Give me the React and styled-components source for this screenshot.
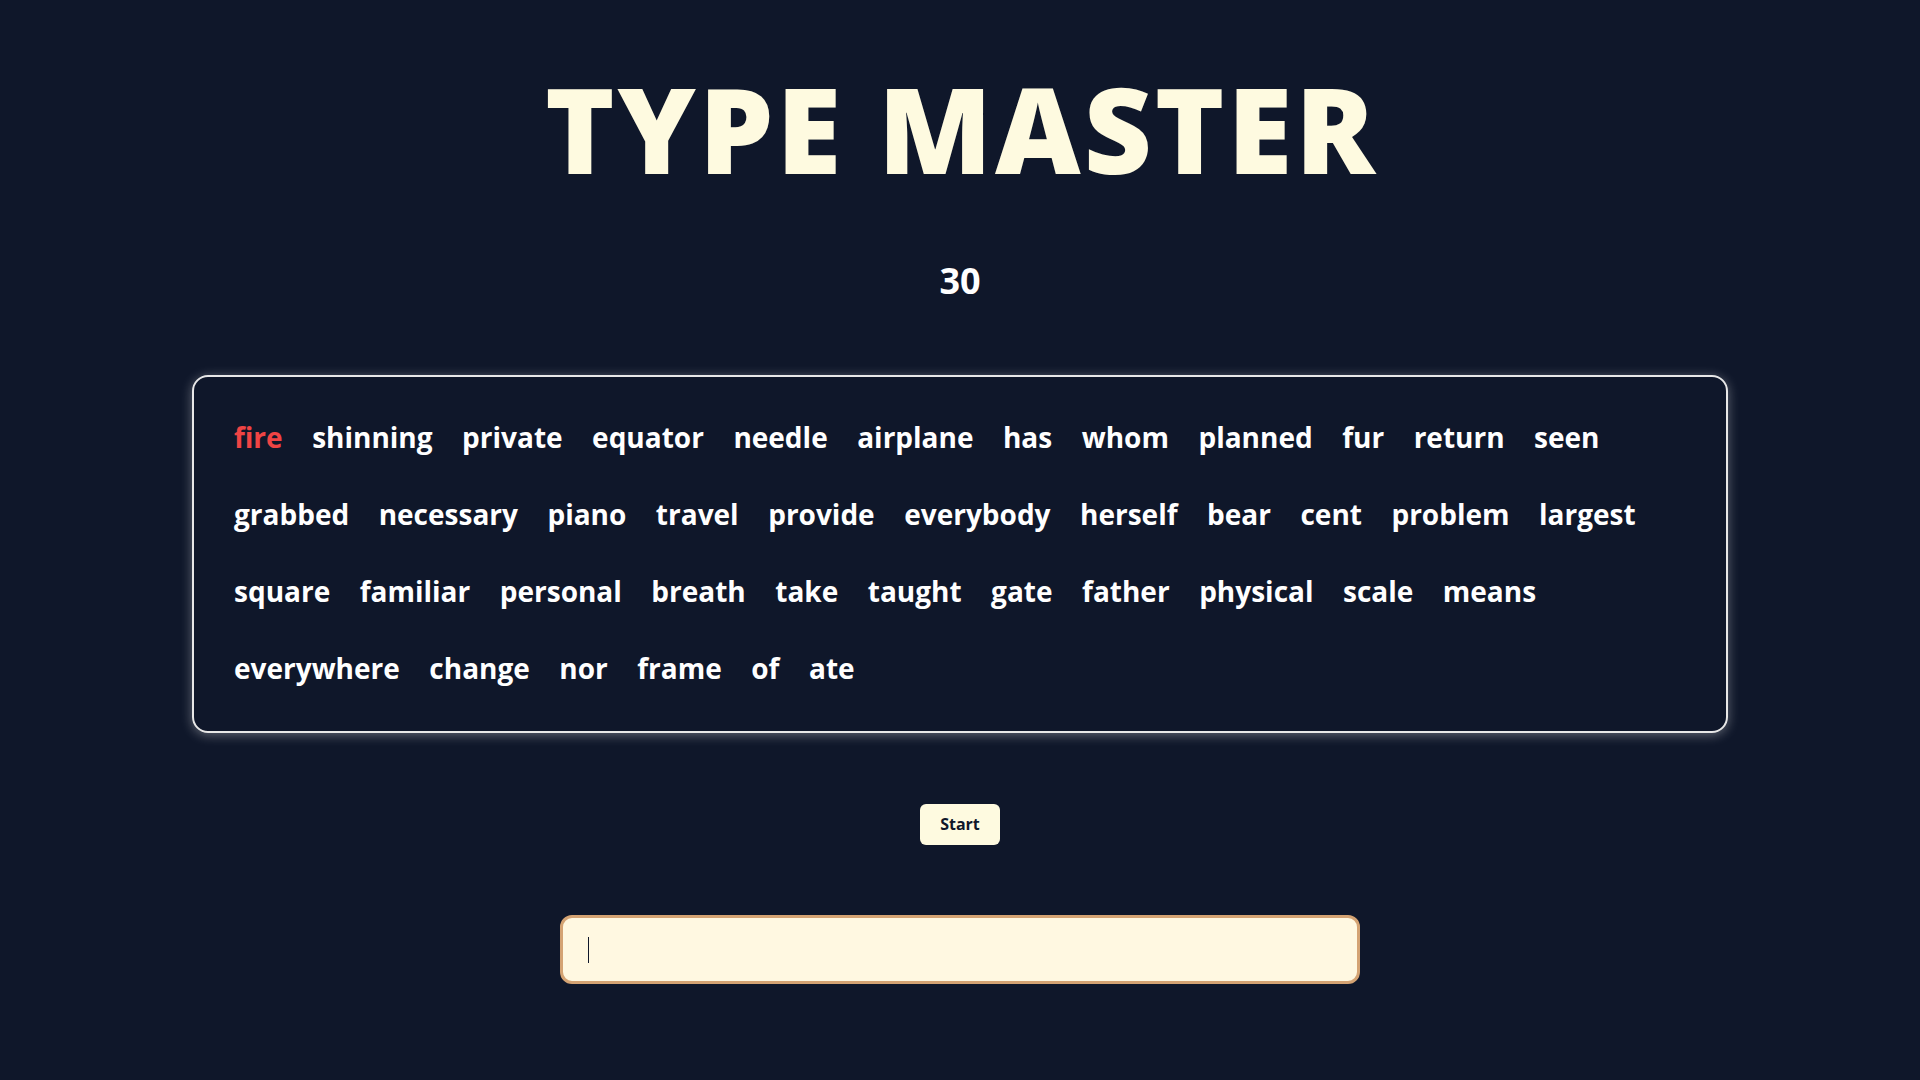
import React, { useRef, useEffect } from "react";
import styled, { createGlobalStyle } from "styled-components";

const GlobalStyle = createGlobalStyle`
  * {
    box-sizing: border-box;
  }
  body {
    margin: 0;
    background: #0f172a;
    font-family: "Open Sans", "Noto Sans", "Liberation Sans", sans-serif;
  }
`;

const Page = styled.div`
  min-height: 100vh;
  display: flex;
  flex-direction: column;
  align-items: center;
  padding-top: 70px;
  background: #0f172a;
`;

const Title = styled.h1`
  margin: 0;
  font-size: 118px;
  line-height: 1;
  font-weight: 800;
  color: #fefae0;
  letter-spacing: 3px;
  padding-left: 3px;
`;

const Timer = styled.div`
  margin-top: 75px;
  font-size: 36px;
  line-height: 1;
  font-weight: 700;
  color: #ffffff;
`;

const WordBox = styled.div`
  margin-top: 76px;
  width: 80%;
  display: flex;
  flex-wrap: wrap;
  column-gap: 29.5px;
  row-gap: 33px;
  padding: 38px 40px 41px;
  border: 2px solid #e8e8e8;
  border-radius: 16px;
  box-shadow: 0 2px 12px rgba(255, 255, 255, 0.35);
`;

const Word = styled.span`
  font-size: 28px;
  line-height: 44px;
  font-weight: 700;
  color: ${(p) => (p.$active ? "#ef4444" : "#ffffff")};
`;

const StartButton = styled.button`
  margin-top: 71px;
  padding: 10px 20px;
  font-family: "Open Sans", "Noto Sans", "Liberation Sans", sans-serif;
  font-size: 16px;
  line-height: 21px;
  font-weight: 700;
  color: #0f172a;
  background: #fefae0;
  border: none;
  border-radius: 6px;
  cursor: pointer;
`;

const InputWrap = styled.div`
  position: relative;
  margin-top: 70px;
  width: 800px;

  /* custom caret, shown while the field is empty */
  &::after {
    content: "";
    position: absolute;
    left: 28px;
    top: 22px;
    width: 1px;
    height: 26px;
    background: #0f172a;
    display: ${(p) => (p.$empty ? "block" : "none")};
    pointer-events: none;
  }
`;

const TypeInput = styled.input`
  display: block;
  width: 100%;
  height: 69px;
  padding: 0 24px;
  font-family: "Open Sans", "Noto Sans", "Liberation Sans", sans-serif;
  font-size: 22px;
  color: #0f172a;
  background: #fff8e1;
  border: 3px solid #d4a373;
  border-radius: 12px;
  outline: none;
  caret-color: transparent;
`;

const words = [
  "fire", "shinning", "private", "equator", "needle", "airplane", "has", "whom",
  "planned", "fur", "return", "seen", "grabbed", "necessary", "piano", "travel",
  "provide", "everybody", "herself", "bear", "cent", "problem", "largest",
  "square", "familiar", "personal", "breath", "take", "taught", "gate", "father",
  "physical", "scale", "means", "everywhere", "change", "nor", "frame", "of", "ate",
];

export default function App() {
  const [value, setValue] = React.useState("");
  const inputRef = useRef(null);

  useEffect(() => {
    inputRef.current && inputRef.current.focus();
  }, []);

  return (
    <Page>
      <GlobalStyle />
      <Title>TYPE MASTER</Title>
      <Timer>30</Timer>
      <WordBox>
        {words.map((w, i) => (
          <Word key={i} $active={i === 0}>
            {w}
          </Word>
        ))}
      </WordBox>
      <StartButton>Start</StartButton>
      <InputWrap $empty={value === ""}>
        <TypeInput
          ref={inputRef}
          type="text"
          value={value}
          onChange={(e) => setValue(e.target.value)}
          autoFocus
        />
      </InputWrap>
    </Page>
  );
}
